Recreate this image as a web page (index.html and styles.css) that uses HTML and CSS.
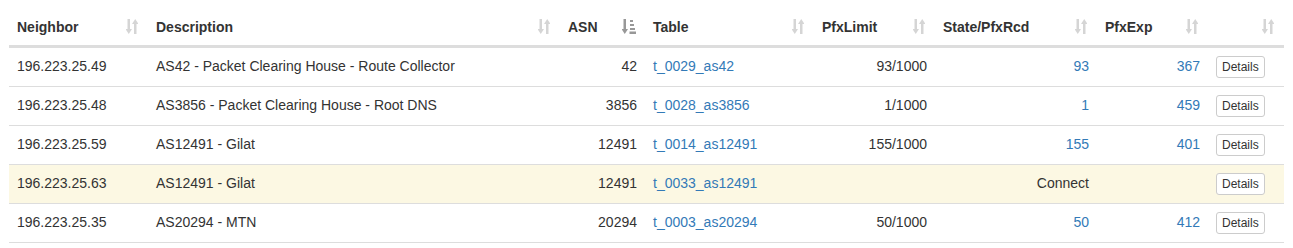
FILE: index.html
```html
<!DOCTYPE html>
<html lang="en">
<head>
    <meta charset="UTF-8">
    <meta name="viewport" content="width=device-width, initial-scale=1.0">
    <title>Neighbors</title>
    <link rel="stylesheet" href="styles.css">
</head>
<body>
    <div class="page">
        <table class="neighbors">
            <thead>
                <tr>
                    <th class="col-neighbor"><div class="th-inner"><span>Neighbor</span><svg class="sort-icon" width="12" height="15" viewBox="0 0 12 15"><path d="M1.5 0h2.5v10h2l-3.25 5l-3.25-5h2z M8 15h2.5v-10h2l-3.25-5l-3.25 5h2z"/></svg></div></th>
                    <th class="col-desc"><div class="th-inner"><span>Description</span><svg class="sort-icon" width="12" height="15" viewBox="0 0 12 15"><path d="M1.5 0h2.5v10h2l-3.25 5l-3.25-5h2z M8 15h2.5v-10h2l-3.25-5l-3.25 5h2z"/></svg></div></th>
                    <th class="col-asn"><div class="th-inner"><span>ASN</span><svg class="sort-icon sorted" width="14" height="15" viewBox="0 0 14 15"><path d="M1.5 0h2.5v10h2l-3.25 5l-3.25-5h2z M8 1h3v2h-3z M8 5h4v2h-4z M8 9h5v2h-5z M7.5 12.5h6.5v2.5h-6.5z"/></svg></div></th>
                    <th class="col-table"><div class="th-inner"><span>Table</span><svg class="sort-icon" width="12" height="15" viewBox="0 0 12 15"><path d="M1.5 0h2.5v10h2l-3.25 5l-3.25-5h2z M8 15h2.5v-10h2l-3.25-5l-3.25 5h2z"/></svg></div></th>
                    <th class="col-limit"><div class="th-inner"><span>PfxLimit</span><svg class="sort-icon" width="12" height="15" viewBox="0 0 12 15"><path d="M1.5 0h2.5v10h2l-3.25 5l-3.25-5h2z M8 15h2.5v-10h2l-3.25-5l-3.25 5h2z"/></svg></div></th>
                    <th class="col-state"><div class="th-inner"><span>State/PfxRcd</span><svg class="sort-icon" width="12" height="15" viewBox="0 0 12 15"><path d="M1.5 0h2.5v10h2l-3.25 5l-3.25-5h2z M8 15h2.5v-10h2l-3.25-5l-3.25 5h2z"/></svg></div></th>
                    <th class="col-exp"><div class="th-inner"><span>PfxExp</span><svg class="sort-icon" width="12" height="15" viewBox="0 0 12 15"><path d="M1.5 0h2.5v10h2l-3.25 5l-3.25-5h2z M8 15h2.5v-10h2l-3.25-5l-3.25 5h2z"/></svg></div></th>
                    <th class="col-action"><div class="th-inner"><span></span><svg class="sort-icon" width="12" height="15" viewBox="0 0 12 15"><path d="M1.5 0h2.5v10h2l-3.25 5l-3.25-5h2z M8 15h2.5v-10h2l-3.25-5l-3.25 5h2z"/></svg></div></th>
                </tr>
            </thead>
            <tbody>
                <tr>
                    <td>196.223.25.49</td>
                    <td>AS42 - Packet Clearing House - Route Collector</td>
                    <td class="num">42</td>
                    <td><a href="#">t_0029_as42</a></td>
                    <td class="num">93/1000</td>
                    <td class="num"><a href="#">93</a></td>
                    <td class="num"><a href="#">367</a></td>
                    <td><button class="btn-details">Details</button></td>
                </tr>
                <tr>
                    <td>196.223.25.48</td>
                    <td>AS3856 - Packet Clearing House - Root DNS</td>
                    <td class="num">3856</td>
                    <td><a href="#">t_0028_as3856</a></td>
                    <td class="num">1/1000</td>
                    <td class="num"><a href="#">1</a></td>
                    <td class="num"><a href="#">459</a></td>
                    <td><button class="btn-details">Details</button></td>
                </tr>
                <tr>
                    <td>196.223.25.59</td>
                    <td>AS12491 - Gilat</td>
                    <td class="num">12491</td>
                    <td><a href="#">t_0014_as12491</a></td>
                    <td class="num">155/1000</td>
                    <td class="num"><a href="#">155</a></td>
                    <td class="num"><a href="#">401</a></td>
                    <td><button class="btn-details">Details</button></td>
                </tr>
                <tr class="warning">
                    <td>196.223.25.63</td>
                    <td>AS12491 - Gilat</td>
                    <td class="num">12491</td>
                    <td><a href="#">t_0033_as12491</a></td>
                    <td class="num"></td>
                    <td class="num">Connect</td>
                    <td class="num"></td>
                    <td><button class="btn-details">Details</button></td>
                </tr>
                <tr>
                    <td>196.223.25.35</td>
                    <td>AS20294 - MTN</td>
                    <td class="num">20294</td>
                    <td><a href="#">t_0003_as20294</a></td>
                    <td class="num">50/1000</td>
                    <td class="num"><a href="#">50</a></td>
                    <td class="num"><a href="#">412</a></td>
                    <td><button class="btn-details">Details</button></td>
                </tr>
            </tbody>
        </table>
    </div>
</body>
</html>
```

FILE: styles.css
```css
* {
    box-sizing: border-box;
}
body, html {
    margin: 0;
    padding: 0;
    background-color: #fff;
    font-family: "Liberation Sans", Arial, sans-serif;
    font-size: 14px;
    line-height: 20px;
    color: #333;
}
.page {
    padding: 9px;
}
.neighbors {
    width: 100%;
    table-layout: fixed;
    border-collapse: separate;
    border-spacing: 0;
}
.neighbors th {
    text-align: left;
    font-weight: bold;
    padding: 8px 10px 8px 8px;
    border-bottom: 2px solid #ddd;
    vertical-align: bottom;
}
.th-inner {
    display: flex;
    justify-content: space-between;
    align-items: flex-end;
    height: 20px;
}
.sort-icon {
    fill: #333;
    opacity: 0.2;
    margin-bottom: 3px;
    flex-shrink: 0;
}
.sort-icon.sorted {
    opacity: 0.5;
}
.col-asn .th-inner {
    margin-right: -1px;
}
.col-neighbor { width: 139px; }
.col-desc { width: 412px; }
.col-asn { width: 85px; }
.col-table { width: 169px; }
.col-limit { width: 121px; }
.col-state { width: 162px; }
.col-exp { width: 111px; }
.col-action { width: 76px; }
.neighbors td {
    padding: 8px;
    border-top: 1px solid #ddd;
    vertical-align: top;
    white-space: nowrap;
}
.neighbors tbody tr:last-child td {
    border-bottom: 1px solid #ddd;
}
.neighbors td.num {
    text-align: right;
}
.neighbors tr.warning td {
    background-color: #fcf8e3;
}
.neighbors a {
    color: #337ab7;
    text-decoration: none;
}
.btn-details {
    display: inline-block;
    font-family: "Liberation Sans", Arial, sans-serif;
    font-size: 12px;
    line-height: 18px;
    padding: 1px 5px;
    color: #333;
    background-color: #fff;
    border: 1px solid #ccc;
    border-radius: 3px;
    vertical-align: top;
    margin: 0;
}
```
